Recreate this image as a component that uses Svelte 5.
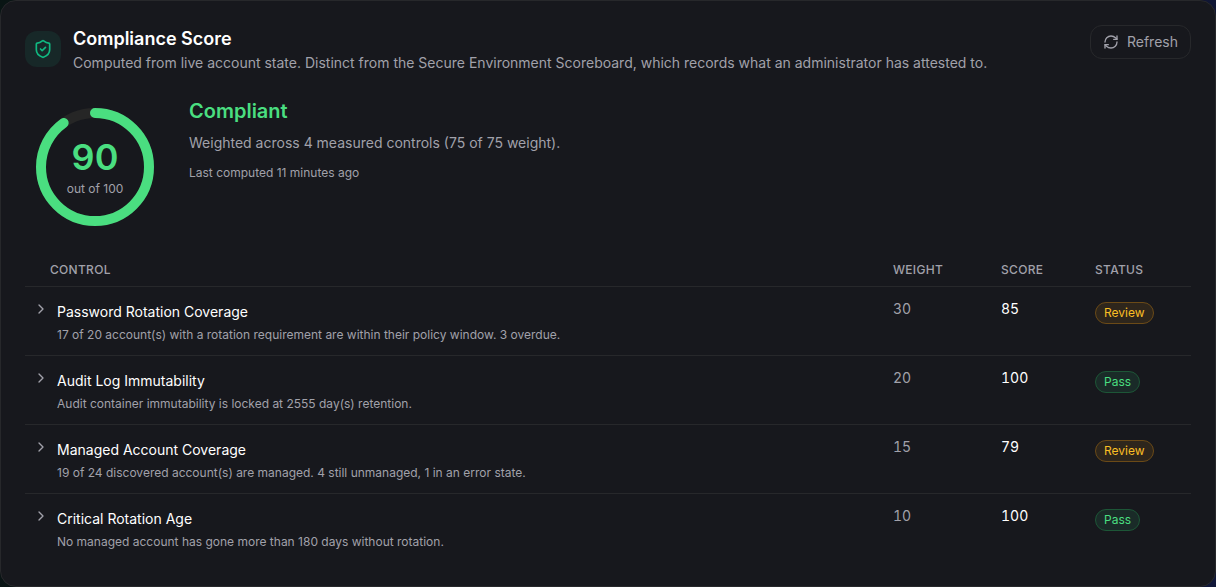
<script lang="ts">
	type Control = {
		name: string;
		detail: string;
		weight: number;
		score: number;
		status: 'Pass' | 'Review';
	};

	const controls: Control[] = [
		{
			name: 'Password Rotation Coverage',
			detail: '17 of 20 account(s) with a rotation requirement are within their policy window. 3 overdue.',
			weight: 30,
			score: 85,
			status: 'Review'
		},
		{
			name: 'Audit Log Immutability',
			detail: 'Audit container immutability is locked at 2555 day(s) retention.',
			weight: 20,
			score: 100,
			status: 'Pass'
		},
		{
			name: 'Managed Account Coverage',
			detail: '19 of 24 discovered account(s) are managed. 4 still unmanaged, 1 in an error state.',
			weight: 15,
			score: 79,
			status: 'Review'
		},
		{
			name: 'Critical Rotation Age',
			detail: 'No managed account has gone more than 180 days without rotation.',
			weight: 10,
			score: 100,
			status: 'Pass'
		}
	];

	const score = 90;
	const radius = 54;
	const circumference = 2 * Math.PI * radius;

	let totalWeight = $derived(controls.reduce((sum, control) => sum + control.weight, 0));
	let offset = $derived(circumference * (1 - score / 100));
</script>

<section class="card">
	<header>
		<div class="shield">
			<svg viewBox="0 0 24 24" width="20" height="20">
				<path
					d="M20 13c0 5-3.5 7.5-7.66 8.95a1 1 0 0 1-.67-.01C7.5 20.5 4 18 4 13V6a1 1 0 0 1 1-1c2 0 4.5-1.2 6.24-2.72a1.17 1.17 0 0 1 1.52 0C14.51 3.81 17 5 19 5a1 1 0 0 1 1 1z"
				/>
				<path d="m9 12 2 2 4-4" />
			</svg>
		</div>
		<div class="heading">
			<h2>Compliance Score</h2>
			<p>
				Computed from live account state. Distinct from the Secure Environment Scoreboard, which
				records what an administrator has attested to.
			</p>
		</div>
		<button class="refresh" type="button">
			<svg viewBox="0 0 24 24" width="16" height="16">
				<path d="M3 12a9 9 0 0 1 9-9 9.75 9.75 0 0 1 6.74 2.74L21 8" />
				<path d="M21 3v5h-5" />
				<path d="M21 12a9 9 0 0 1-9 9 9.75 9.75 0 0 1-6.74-2.74L3 16" />
				<path d="M8 16H3v5" />
			</svg>
			Refresh
		</button>
	</header>

	<div class="summary">
		<div class="gauge">
			<svg viewBox="0 0 140 140" width="140" height="140">
				<circle class="track" cx="70" cy="70" r={radius} />
				<circle
					class="value"
					cx="70"
					cy="70"
					r={radius}
					stroke-dasharray={circumference}
					stroke-dashoffset={offset}
					transform="rotate(-90 70 70)"
				/>
			</svg>
			<div class="reading">
				<span class="number">{score}</span>
				<span class="scale">out of 100</span>
			</div>
		</div>
		<div class="verdict">
			<h3>Compliant</h3>
			<p class="weighted">
				Weighted across {controls.length} measured controls ({totalWeight} of {totalWeight} weight).
			</p>
			<p class="computed">Last computed 11 minutes ago</p>
		</div>
	</div>

	<table>
		<thead>
			<tr>
				<th class="control">Control</th>
				<th class="weight">Weight</th>
				<th class="score">Score</th>
				<th class="status">Status</th>
			</tr>
		</thead>
		<tbody>
			{#each controls as control}
				<tr>
					<td class="control">
						<button class="toggle" type="button" aria-expanded="false">
							<svg viewBox="0 0 24 24" width="16" height="16">
								<path d="m9 18 6-6-6-6" />
							</svg>
							<span class="text">
								<span class="name">{control.name}</span>
								<span class="detail">{control.detail}</span>
							</span>
						</button>
					</td>
					<td class="weight">{control.weight}</td>
					<td class="score">{control.score}</td>
					<td class="status">
						<span class="badge" class:pass={control.status === 'Pass'}>{control.status}</span>
					</td>
				</tr>
			{/each}
		</tbody>
	</table>
</section>

<style>
	:global(body) {
		background: linear-gradient(100deg, #091514, #0b0c14 50%, #11183a);
	}
	.card {
		box-sizing: border-box;
		min-height: 100vh;
		padding: 24px;
		border: 1px solid #27282b;
		border-radius: 16px;
		background: #17181d;
		color: #a1a1aa;
		font-family: Inter, 'Liberation Sans', sans-serif;
		font-size: 14px;
		line-height: 20px;
	}
	h2,
	h3,
	p {
		margin: 0;
	}
	svg {
		display: block;
		flex-shrink: 0;
		fill: none;
		stroke: currentColor;
		stroke-width: 2;
		stroke-linecap: round;
		stroke-linejoin: round;
	}
	button {
		border: none;
		background: none;
		color: inherit;
		font: inherit;
		cursor: pointer;
	}
	header {
		display: flex;
		align-items: center;
		gap: 12px;
		margin-bottom: 24px;
	}
	.shield {
		display: flex;
		flex-shrink: 0;
		align-items: center;
		justify-content: center;
		width: 36px;
		height: 36px;
		border-radius: 12px;
		background: #172828;
		color: #10b981;
	}
	.heading {
		flex: 1;
	}
	h2 {
		color: #fff;
		font-size: 18px;
		font-weight: 600;
		line-height: 28px;
	}
	.refresh {
		display: flex;
		align-items: center;
		align-self: flex-start;
		gap: 8px;
		padding: 6px 12px;
		border: 1px solid #27282b;
		border-radius: 12px;
	}
	.summary {
		display: flex;
		gap: 24px;
		margin-bottom: 17px;
	}
	.gauge {
		position: relative;
		flex-shrink: 0;
	}
	.gauge circle {
		stroke-width: 10;
	}
	.gauge .track {
		stroke: #262626;
	}
	.gauge .value {
		stroke: #4ade80;
	}
	.reading {
		position: absolute;
		inset: 0;
		display: flex;
		flex-direction: column;
		align-items: center;
		justify-content: center;
	}
	.number {
		color: #4ade80;
		font-size: 36px;
		font-weight: 600;
		line-height: 40px;
	}
	.scale {
		margin-top: 4px;
		font-size: 12px;
		line-height: 16px;
	}
	h3 {
		color: #4ade80;
		font-size: 20px;
		font-weight: 600;
		line-height: 28px;
	}
	.weighted {
		margin-top: 8px;
	}
	.computed {
		margin-top: 12px;
		font-size: 12px;
		line-height: 16px;
	}
	table {
		width: 100%;
		border-spacing: 0;
		table-layout: fixed;
	}
	th {
		padding: 8px 12px;
		border-bottom: 1px solid #27282b;
		font-size: 12px;
		font-weight: 500;
		letter-spacing: 0.025em;
		line-height: 16px;
		text-align: left;
		text-transform: uppercase;
	}
	th.control {
		padding-left: 25px;
	}
	th.weight,
	th.status {
		width: 84px;
	}
	th.score {
		width: 70px;
	}
	td {
		padding: 12px;
		font-variant-numeric: tabular-nums;
		vertical-align: top;
	}
	tbody tr:not(:last-child) td {
		border-bottom: 1px solid #27282b;
	}
	td.control {
		padding: 14px 8px 12px;
	}
	td.score {
		color: #fff;
	}
	.toggle {
		display: flex;
		gap: 8px;
		padding: 0;
		text-align: left;
		font-variant-numeric: normal;
	}
	.text {
		display: flex;
		flex-direction: column;
		gap: 4px;
	}
	.name {
		color: #fff;
		line-height: 22px;
	}
	.detail {
		font-size: 12px;
		line-height: 16px;
	}
	td.status {
		padding-top: 15px;
	}
	.badge {
		display: inline-flex;
		padding: 2px 8px;
		border: 1px solid #6b4a17;
		border-radius: 12px;
		background: #2e261c;
		color: #fbbf24;
		font-size: 12px;
		line-height: 16px;
	}
	.badge.pass {
		border-color: #1d5637;
		background: #1a2b28;
		color: #4ade80;
	}
</style>
